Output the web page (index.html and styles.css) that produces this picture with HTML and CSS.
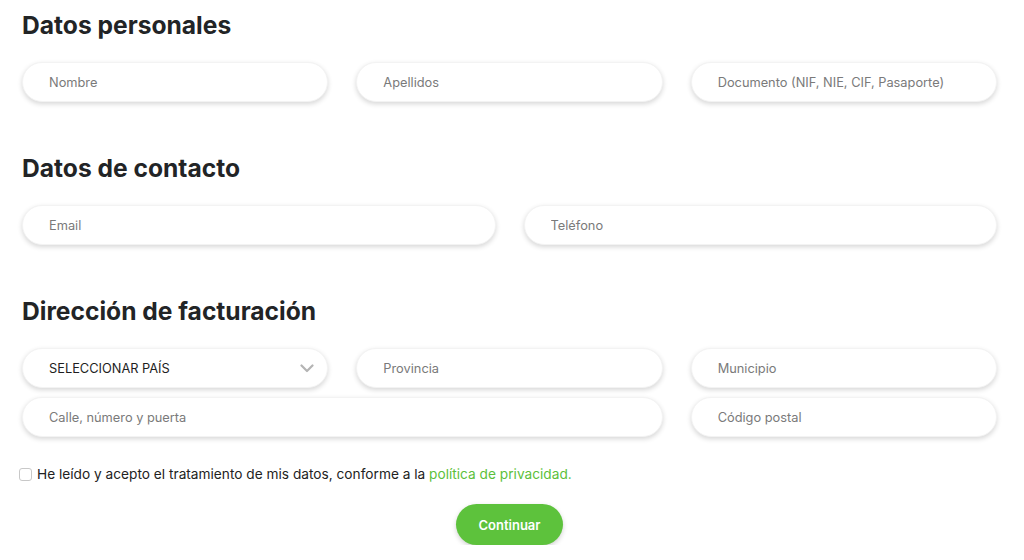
FILE: index.html
```html
<!DOCTYPE html>
<html lang="es">
<head>
<meta charset="utf-8">
<title>Datos</title>
<link rel="stylesheet" href="styles.css">
</head>
<body>
<form class="form">
  <section class="section">
    <h2 class="title">Datos personales</h2>
    <div class="grid grid-3">
      <input class="field" type="text" placeholder="Nombre">
      <input class="field" type="text" placeholder="Apellidos">
      <input class="field" type="text" placeholder="Documento (NIF, NIE, CIF, Pasaporte)">
    </div>
  </section>
  <section class="section">
    <h2 class="title">Datos de contacto</h2>
    <div class="grid grid-2">
      <input class="field" type="text" placeholder="Email">
      <input class="field" type="text" placeholder="Teléfono">
    </div>
  </section>
  <section class="section last">
    <h2 class="title">Dirección de facturación</h2>
    <div class="grid grid-3 tight">
      <div class="field select">
        <span>SELECCIONAR PAÍS</span>
        <svg class="chev" width="14" height="9" viewBox="0 0 14 9"><path d="M1.5 1.5 L7 7 L12.5 1.5" fill="none" stroke="#b4b4b4" stroke-width="2.2" stroke-linecap="round" stroke-linejoin="round"/></svg>
      </div>
      <input class="field" type="text" placeholder="Provincia">
      <input class="field" type="text" placeholder="Municipio">
      <input class="field span-2" type="text" placeholder="Calle, número y puerta">
      <input class="field" type="text" placeholder="Código postal">
    </div>
  </section>
  <label class="check">
    <span class="box"></span>
    <span>He leído y acepto el tratamiento de mis datos, conforme a la <a class="link" href="#">política de privacidad.</a></span>
  </label>
  <div class="actions">
    <button class="btn" type="button">Continuar</button>
  </div>
</form>
</body>
</html>
```
FILE: styles.css
```css
* { box-sizing: border-box; }
html, body { margin: 0; padding: 0; background: #fff; }
body {
  font-family: Inter, "Noto Sans", sans-serif;
  color: #222;
}
.form {
  width: 975px;
  margin: 0 0 0 22px;
  padding-top: 10px;
}
.section { margin-bottom: 51px; }
.section.last { margin-bottom: 0; }
.title {
  margin: 0 0 22px;
  font-size: 24.6px;
  line-height: 30px;
  font-weight: 700;
  color: #222426;
  letter-spacing: 0;
}
.grid { display: grid; column-gap: 28px; }
.grid-3 { grid-template-columns: repeat(3, 1fr); }
.grid-2 { grid-template-columns: repeat(2, 1fr); }
.tight { row-gap: 9px; }
.span-2 { grid-column: span 2; }
.field {
  height: 40px;
  border: 1px solid #f3f3f3;
  border-radius: 20px;
  background: #fff;
  box-shadow: 0 2px 5px rgba(0,0,0,0.16);
  padding: 0 20px 0 26px;
  font-family: inherit;
  font-size: 12.8px;
  color: #222;
  outline: none;
  width: 100%;
}
.field::placeholder { color: #7a7a7a; }
.select {
  display: flex;
  align-items: center;
  justify-content: space-between;
  color: #1e1e1e;
  padding-right: 13px;
}
.chev { display: block; }
.check {
  display: flex;
  align-items: center;
  gap: 5px;
  margin: 29px 0 0 -3px;
  font-size: 13.7px;
  color: #222;
}
.box {
  width: 13px;
  height: 13px;
  border: 1px solid #c8c8c8;
  border-radius: 3px;
  background: #fff;
  flex: none;
}
.link { color: #5cbf3b; text-decoration: none; }
.actions {
  display: flex;
  justify-content: center;
  margin-top: 22px;
}
.btn {
  width: 107px;
  height: 41px;
  border: none;
  border-radius: 21px;
  background: #5dc23c;
  color: #fff;
  font-family: inherit;
  font-weight: 600;
  font-size: 13px;
  box-shadow: 0 2px 5px rgba(0,0,0,0.18);
  cursor: pointer;
}
```
